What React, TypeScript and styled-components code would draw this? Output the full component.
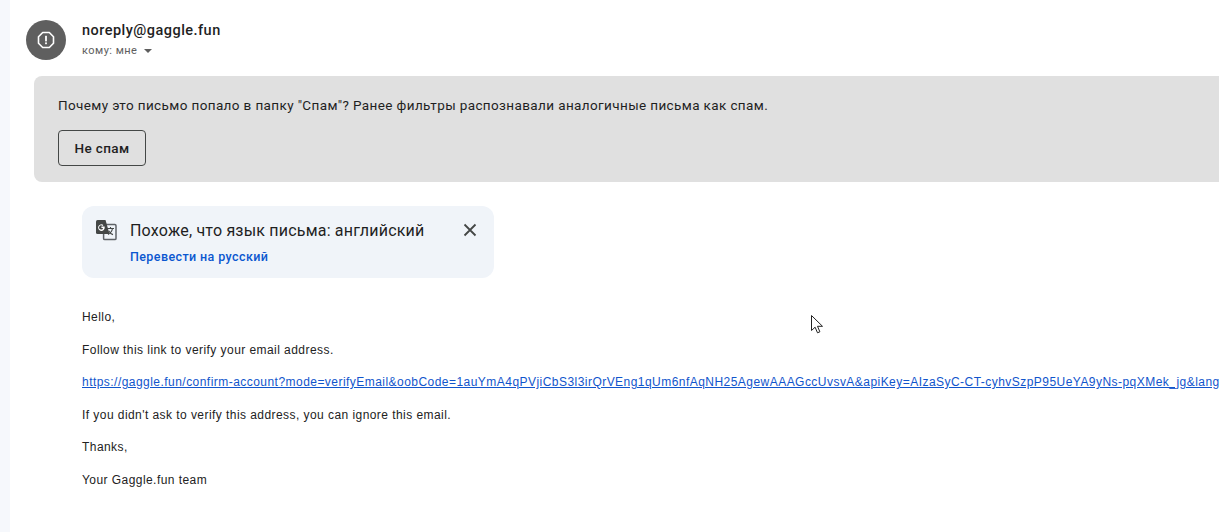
import React, { FC } from 'react';
import styled, { createGlobalStyle } from 'styled-components';

const GlobalStyle = createGlobalStyle`
  html, body {
    margin: 0;
    padding: 0;
    height: 100%;
    background: #fff;
    overflow: hidden;
  }
`;

const Page = styled.div`
  display: flex;
  width: 1219px;
  height: 532px;
  overflow: hidden;
  position: relative;
  font-family: Roboto, 'Liberation Sans', sans-serif;
  color: #1f1f1f;
`;

const Rail = styled.div`
  flex: 0 0 10px;
  background: #f6f8fc;
`;

const Main = styled.main`
  flex: 1;
  min-width: 0;
  background: #fff;
  padding: 20px 0 0 16px;
`;

const Header = styled.header`
  display: flex;
  gap: 16px;
  height: 40px;
`;

const Avatar = styled.div`
  width: 40px;
  height: 40px;
  border-radius: 50%;
  background: #5f5f5f;
  display: flex;
  align-items: center;
  justify-content: center;
  flex: none;
`;

const Sender = styled.div`
  display: flex;
  flex-direction: column;
  padding-top: 2px;
`;

const SenderName = styled.div`
  font-size: 14.5px;
  line-height: 18px;
  font-weight: 500;
  letter-spacing: 0.47px;
  color: #1f1f1f;
`;

const Recipient = styled.div`
  display: flex;
  align-items: center;
  gap: 7px;
  margin-top: 3px;
  font-size: 11px;
  line-height: 16px;
  letter-spacing: 0.47px;
  color: #5e5e5e;
`;

const Caret = styled.span`
  width: 0;
  height: 0;
  border-left: 4px solid transparent;
  border-right: 4px solid transparent;
  border-top: 4px solid #5e5e5e;
`;

const SpamBanner = styled.section`
  margin: 16px 0 0 8px;
  height: 106px;
  box-sizing: border-box;
  padding: 21px 24px 0;
  background: #e0e0e0;
  border-radius: 8px 0 0 8px;
`;

const BannerText = styled.div`
  font-size: 13.5px;
  line-height: 16px;
  letter-spacing: 0.38px;
  color: #1f1f1f;
  white-space: nowrap;
`;

const NotSpamButton = styled.button`
  display: block;
  margin-top: 17px;
  width: 88px;
  height: 36px;
  padding: 0;
  background: transparent;
  border: 1px solid #444746;
  border-radius: 4px;
  font-family: inherit;
  font-size: 13.5px;
  font-weight: 500;
  letter-spacing: 0.35px;
  color: #1f1f1f;
`;

const Content = styled.div`
  margin: 24px 0 0 56px;
`;

const TranslateCard = styled.div`
  width: 412px;
  height: 72px;
  box-sizing: border-box;
  padding: 12px 12px 0 12px;
  background: #f0f4f9;
  border-radius: 12px;
  display: grid;
  grid-template-columns: 24px 1fr 24px;
  column-gap: 12px;
  grid-template-rows: 24px auto;
`;

const CardTitle = styled.div`
  font-size: 16px;
  line-height: 25px;
  letter-spacing: 0.2px;
  color: #1f1f1f;
  white-space: nowrap;
`;

const CardLink = styled.a`
  grid-column: 2;
  margin-top: 7px;
  font-size: 12.5px;
  line-height: 16px;
  font-weight: 500;
  letter-spacing: 0.4px;
  color: #0b57d0;
  text-decoration: none;
`;

const CloseButton = styled.span`
  display: flex;
  align-items: center;
  justify-content: center;
`;

const Body = styled.div`
  margin-top: 31px;
  font-family: 'Liberation Sans', Arial, sans-serif;
  font-size: 12px;
  line-height: 16px;
  letter-spacing: 0.44px;
  color: #222;
  display: flex;
  flex-direction: column;
  gap: 16.5px;
  white-space: nowrap;
`;

const BodyLine = styled.div``;

const BodyLink = styled.a`
  color: #1155cc;
  letter-spacing: 0.46px;
  text-decoration: underline;
`;

const Cursor = styled.svg`
  position: absolute;
  left: 811px;
  top: 315px;
`;

const WarningIcon: FC = () => (
  <svg width="20" height="20" viewBox="0 0 20 20" fill="none">
    <path
      d="M6.700 2.500h6.600l4.200 4.200v6.600l-4.200 4.200H6.700l-4.200-4.200V6.700z"
      stroke="#fff"
      strokeWidth="1.600"
      strokeLinejoin="round"
    />
    <rect x="9.100" y="5.800" width="1.800" height="5.600" fill="#fff" />
    <rect x="9.100" y="12.400" width="1.800" height="1.800" fill="#fff" />
  </svg>
);

const TranslateIcon: FC = () => (
  <svg width="24" height="24" viewBox="0 0 24 24">
    <rect x="9.600" y="6.600" width="12.400" height="15" rx="1.200" fill="#f0f4f9" stroke="#5f6368" strokeWidth="1.500" />
    <path d="M3.500 2h8l4 14H3.500A1.500 1.500 0 0 1 2 14.500V3.500A1.500 1.500 0 0 1 3.500 2z" fill="#444746" />
    <path d="M10.600 8.600H7.400v1.300h1.700a2 2 0 1 1-.6-2l.9-.9A3.300 3.300 0 1 0 10.700 9.300z" fill="#fff" />
    <path
      d="M13 10.500h7M16.500 9v1.500M18.500 10.500c-.5 2.700-2.200 4.900-4.500 6M14.700 12.800c.8 1.700 2.300 3.200 4.300 3.800"
      stroke="#444746"
      strokeWidth="1.100"
      fill="none"
    />
  </svg>
);

const App: FC = () => (
  <>
    <GlobalStyle />
    <Page>
      <Rail />
      <Main>
        <Header>
          <Avatar>
            <WarningIcon />
          </Avatar>
          <Sender>
            <SenderName>noreply@gaggle.fun</SenderName>
            <Recipient>
              кому: мне
              <Caret />
            </Recipient>
          </Sender>
        </Header>
        <SpamBanner>
          <BannerText>
            Почему это письмо попало в папку "Спам"? Ранее фильтры распознавали аналогичные письма как спам.
          </BannerText>
          <NotSpamButton>Не спам</NotSpamButton>
        </SpamBanner>
        <Content>
          <TranslateCard>
            <TranslateIcon />
            <CardTitle>Похоже, что язык письма: английский</CardTitle>
            <CloseButton>
              <svg width="14" height="14" viewBox="0 0 14 14">
                <path d="M1.500 1.500l11 11M12.500 1.500l-11 11" stroke="#444746" strokeWidth="1.800" />
              </svg>
            </CloseButton>
            <CardLink href="#">Перевести на русский</CardLink>
          </TranslateCard>
          <Body>
            <BodyLine>Hello,</BodyLine>
            <BodyLine>Follow this link to verify your email address.</BodyLine>
            <BodyLine>
              <BodyLink href="#">
                https://gaggle.fun/confirm-account?mode=verifyEmail&amp;oobCode=1auYmA4qPVjiCbS3l3irQrVEng1qUm6nfAqNH25AgewAAAGccUvsvA&amp;apiKey=AIzaSyC-CT-cyhvSzpP95UeYA9yNs-pqXMek_jg&amp;lang=en
              </BodyLink>
            </BodyLine>
            <BodyLine>If you didn't ask to verify this address, you can ignore this email.</BodyLine>
            <BodyLine>Thanks,</BodyLine>
            <BodyLine>Your Gaggle.fun team</BodyLine>
          </Body>
        </Content>
      </Main>
      <Cursor width="13" height="20" viewBox="0 0 13 20">
        <path d="M0.500 0.500v15l3.600-3.300 2.400 5.600 2.400-1-2.400-5.500h5z" fill="#fff" stroke="#222" strokeWidth="1" />
      </Cursor>
    </Page>
  </>
);

export default App;
